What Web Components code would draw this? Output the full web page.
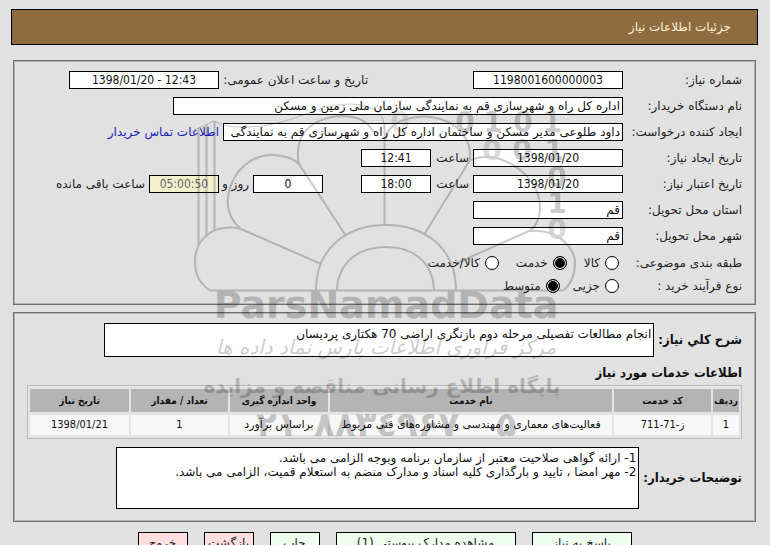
<!DOCTYPE html>
<html lang="fa" dir="rtl">
<head>
<meta charset="utf-8">
<title>جزئیات اطلاعات نیاز</title>
<style>
  html { background: #e1e1e1; overflow: hidden; }
  body {
    margin: 0; padding: 9px 12px 0 11px; position: relative;
    font-family: "DejaVu Sans", "Noto Sans", sans-serif; font-size: 12px; line-height: 16px; color: #222;
    --num: "DejaVu Sans Condensed", "DejaVu Sans", sans-serif;
    --line: #000;
  }
</style>
</head>
<body>
<page-banner>جزئیات اطلاعات نیاز</page-banner>
<info-panel>
  <field-row>
    <form-field label="شماره نیاز:" lead value="1198001600000003" numeric></form-field>
    <form-field class="far" label="تاریخ و ساعت اعلان عمومی:" label-width="145" value="1398/01/20 - 12:43" numeric></form-field>
  </field-row>
  <field-row>
    <form-field label="نام دستگاه خریدار:" lead width="450" value="اداره کل راه و شهرسازی قم به نمایندگی سازمان ملی زمین و مسکن"></form-field>
  </field-row>
  <field-row>
    <form-field label="ایجاد کننده درخواست:" lead width="400" value="داود طلوعی مدیر مسکن و ساختمان اداره کل راه و شهرسازی قم به نمایندگی"></form-field>
    <contact-link>اطلاعات تماس خریدار</contact-link>
  </field-row>
  <field-row>
    <form-field label="تاریخ ایجاد نیاز:" lead value="1398/01/20" numeric></form-field>
    <form-field label="ساعت" label-width="34" width="70" value="12:41" numeric></form-field>
  </field-row>
  <field-row>
    <form-field label="تاریخ اعتبار نیاز:" lead value="1398/01/20" numeric></form-field>
    <form-field label="ساعت" label-width="34" width="70" value="18:00" numeric></form-field>
    <form-field class="near" after label="روز و" width="70" label-width="26" value="0" numeric></form-field>
    <form-field after label="ساعت باقی مانده" width="70" value="05:00:50" numeric muted></form-field>
  </field-row>
  <field-row>
    <form-field label="استان محل تحویل:" lead value="قم"></form-field>
  </field-row>
  <field-row>
    <form-field label="شهر محل تحویل:" lead value="قم"></form-field>
  </field-row>
  <radio-row label="طبقه بندی موضوعی:" options="کالا|خدمت|کالا/خدمت" selected="1" wide></radio-row>
  <radio-row label="نوع فرآیند خرید :" options="جزیی|متوسط" selected="1"></radio-row>
</info-panel>
<info-panel>
  <note-field label="شرح كلي نیاز:" text="انجام مطالعات تفصیلی مرحله دوم بازنگری اراضی 70 هکتاری پردیسان" style="--h:34px;--w:550px;--gap:4px"></note-field>
  <section-title>اطلاعات خدمات مورد نیاز</section-title>
  <service-table></service-table>
  <note-field label="توضیحات خریدار:" text="1- ارائه گواهی صلاحیت معتبر از سازمان برنامه وبوجه الزامی می باشد.&#10;2- مهر امضا ، تایید و بارگذاری کلیه اسناد و مدارک منضم به استعلام قمیت، الزامی می باشد." style="--h:62px;--w:523px;--gap:4px"></note-field>
</info-panel>
<action-bar>
  <action-button style="--w:100px">پاسخ به نیاز</action-button>
  <action-button style="--w:180px">مشاهده مدارک پیوستی (1)</action-button>
  <action-button>چاپ</action-button>
  <action-button style="--bg:#ffdfdf">بازگشت</action-button>
  <action-button style="--bg:#ffdfdf">خروج</action-button>
</action-bar>
<water-mark aria-hidden="true"></water-mark>

<script>
const make = (name, css, html) => customElements.define(name, class extends HTMLElement {
  connectedCallback() {
    if (this.shadowRoot) return;
    this.attachShadow({ mode: 'open' }).innerHTML =
      `<style>*{box-sizing:border-box}:host{box-sizing:border-box}${css}</style>` + (typeof html === 'function' ? html(this) : html);
  }
});
const at = (el, n, d = '') => el.getAttribute(n) ?? d;

make('page-banner', `
  :host{display:block;background:#8f6c40;border:1px solid #000;padding:9px 26px 9px 9px;color:#fdf3dc}
  h1{margin:0;font-size:12px;font-weight:400;line-height:16px}
`, '<h1><slot></slot></h1>');

make('info-panel', `
  :host{display:block;margin:15px 2px 0;border:1px solid #6e6e6e;box-shadow:inset 0 0 0 1px #b4b4b4;padding:10px 13px 7px}
  :host(:nth-of-type(2)){margin-top:7px;padding-bottom:12px}
`, '<slot></slot>');

make('field-row', `
  :host{display:flex;align-items:center;gap:4px;height:18px;margin-bottom:8px}
  :host(:nth-of-type(7)){margin-bottom:6px}
  ::slotted(.far){margin-right:101px}
  ::slotted(.near){margin-right:34px}
`, '<slot></slot>');

make('form-field', `
  :host{display:flex;align-items:center;gap:4px;flex:none}
  :host([lead]){gap:0}
  label{flex:none;white-space:nowrap}
  :host([lead]) label{width:119px}
  input{flex:none;height:18px;margin:0;padding:0 2px;border:1px solid var(--line);background:#fff;color:#111;
    font:12px "DejaVu Sans",sans-serif;outline:0;border-radius:0}
  :host([numeric]) input{text-align:center;font-family:var(--num);direction:ltr}
  :host([muted]) input{background:#f0f0cc;color:#666}
`, el => {
  const lw = at(el, 'label-width');
  const l = `<label for="f"${lw ? ` style="width:${lw}px"` : ''}>${at(el, 'label')}</label>`;
  const i = `<input id="f" readonly style="width:${at(el, 'width', '150')}px" value="${at(el, 'value')}">`;
  return el.hasAttribute('after') ? i + l : l + i;
});

make('contact-link', `:host{display:block;white-space:nowrap} a{color:#2020c0;text-decoration:none}`,
  '<a href="#contact"><slot></slot></a>');

make('radio-row', `
  :host{display:block}
  fieldset{border:0;margin:0;padding:0;height:23px;display:flex;align-items:center}
  .t{width:123px;flex:none}
  label{display:flex;align-items:center;gap:5px;margin-left:17px;white-space:nowrap}
  :host(:not([wide])) label{margin-left:13px}
  input{appearance:none;width:14px;height:14px;margin:0;border:1px solid #000;border-radius:50%;background:#fff}
  input:checked{background:#000;box-shadow:inset 0 0 0 1px #fff}
`, el => `<fieldset role="radiogroup" aria-labelledby="t"><span class="t" id="t">${at(el, 'label')}</span>${
  at(el, 'options').split('|').map((o, i) =>
    `<label><input type="radio" name="g"${String(i) === at(el, 'selected') ? ' checked' : ''}>${o}</label>`).join('')}</fieldset>`);

make('note-field', `
  :host{display:flex;align-items:center;gap:var(--gap)}
  label{font-family:var(--num);font-weight:700;font-size:13px;white-space:nowrap;color:#111;flex:none}
  textarea{width:var(--w);height:var(--h);margin:0;padding:3px 2px;border:1px solid var(--line);border-radius:0;background:#fff;color:#111;
    font:12px/14px "DejaVu Sans",sans-serif;resize:none;overflow:hidden;outline:0;white-space:pre-wrap}
`, el => `<label for="n">${at(el, 'label')}</label><textarea id="n" readonly>${at(el, 'text')}</textarea>`);

make('section-title', `:host{display:block;margin:8px 0 4px} h2{margin:0;font-family:var(--num);font-size:13px;line-height:16px;color:#111}`,
  '<h2><slot></slot></h2>');

make('service-table', `
  :host{display:block;margin-bottom:8px}
  table{width:100%;table-layout:fixed;border:1px solid #bbb;border-spacing:2px 3px;background:#e4e4e4;
    font-size:11px;line-height:14px;color:#111}
  th{background:#b4b4b4;height:23px;padding:0;font-family:var(--num);font-size:10px}
  td{background:#f7f7f7;height:20px;padding:0;text-align:center;white-space:nowrap}
  .n{font-family:var(--num)}
`, () => {
  const head = ['ردیف', 'کد خدمت', 'نام خدمت', 'واحد اندازه گیری', 'تعداد / مقدار', 'تاریخ نیاز'];
  const row = ['1', 'ز-71-711', 'فعالیت‌های معماری و مهندسی و مشاوره‌های فنی مربوط', 'براساس برآورد', '1', '1398/01/21'];
  const w = ['26px', '97px', 'auto', '98px', '97px', '99px'];
  return `<table><colgroup>${w.map(x => `<col style="width:${x}">`).join('')}</colgroup><thead><tr>${
    head.map(h => `<th scope="col">${h}</th>`).join('')}</tr></thead><tbody><tr>${
    row.map(c => `<td${/\d/.test(c) ? ' class="n"' : ''}>${c}</td>`).join('')}</tr></tbody></table>`;
});

make('action-bar', `:host{display:flex;justify-content:center;gap:16px;margin-top:10px}`, '<slot></slot>');
make('action-button', `
  :host{display:block}
  button{width:var(--w,50px);height:22px;padding:0;border:1px solid #000;border-radius:0;background:var(--bg,#efffef);
    color:#222;font:12px "DejaVu Sans",sans-serif;white-space:nowrap}
`, '<button type="button"><slot></slot></button>');

/* Site mark laid over the whole form: a flower, binary digits and the site's names. */
make('water-mark', `
  :host{position:absolute;left:190px;top:80px;width:390px;height:370px;pointer-events:none;opacity:.2}
  svg{display:block;width:100%;height:100%}
  text{fill:#000;font-family:"DejaVu Sans",sans-serif;font-weight:700}
  .num text{font-size:28px;text-anchor:middle}
`, `<svg viewBox="190 80 390 370" direction="ltr">
  <g fill="none" stroke="#000" stroke-width="2">
    <path d="M209 290.500H564"/>
    <path d="M316 290C316 248 347 225 386 225S456 248 456 290"/>
    <path d="M337 290C338 262 359 247 386 247S433 262 434 290"/>
    <path d="M209 290C198 281 195 274 195 260C196 238 214 223 241 229L321 264"/>
    <path d="M241 229C227 217 227 205 228 197C232 168 255 154 274 155Q291 156 299 164L346 236"/>
    <path d="M299 164C297 157 298 149 299 144C303 127 320 117 341 116Q366 116 373 132"/>
    <path d="M384.500 225V124"/>
    <path d="M385 140C387 124 406 115 431 117C460 121 472 141 470 160L424 235"/>
    <path d="M471 160Q485 154 500 159C530 170 541 192 540 211Q538 226 529 231L457 263"/>
    <path d="M529 231C560 228 575 250 575 262Q575 281 564 290"/>
    <path d="M198.500 128V246M206.500 125V236M214.500 121V231"/>
    <path stroke-width="1" d="M194 130L214 121Q228 130 262 126C302 120 315 105 350 104Q382 105 384 124"/>
  </g>
  <g class="num">
    <text x="400" y="132" opacity=".5">0</text>
    <text x="465" y="132">0</text><text x="493" y="132">1</text><text x="523" y="132">0</text><text x="552" y="132">1</text>
    <text x="492" y="160" opacity=".7">0</text><text x="522" y="160">0</text><text x="554" y="160">1</text>
    <text x="557" y="187">0</text><text x="557" y="213">1</text><text x="557" y="239" opacity=".7">0</text>
  </g>
  <text x="386" y="318" text-anchor="middle" font-size="38">ParsNamadData</text>
  <text x="386" y="354" text-anchor="middle" direction="rtl" font-size="20" style="font-weight:400;font-style:italic">مرکز فرآوری اطلاعات پارس نماد داده ها</text>
  <text x="382" y="393" text-anchor="middle" direction="rtl" font-size="20">پایگاه اطلاع رسانی مناقصه و مزایده</text>
  <g font-size="34">
    <text x="256" y="436">۲۱</text><text x="314" y="436">۸۸۳٤۹۶۷</text><text x="496" y="436">۵</text>
  </g>
</svg>`);
</script>
</body>
</html>
